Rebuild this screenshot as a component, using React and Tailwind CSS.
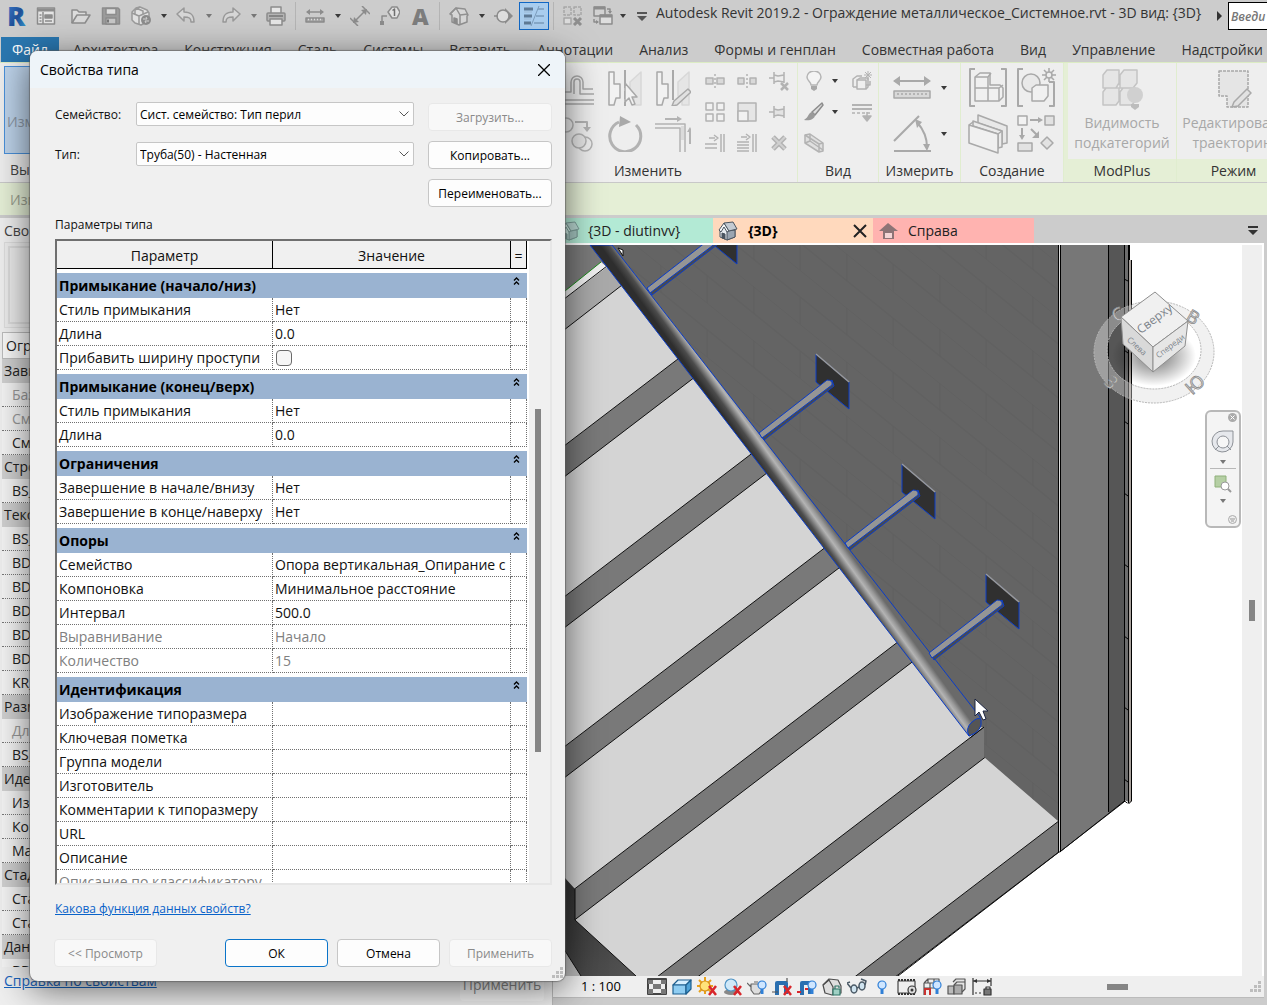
import clsx from 'clsx';

const MENU = [
  'Архитектура', 'Конструкция', 'Сталь', 'Системы', 'Вставить', 'Аннотации', 'Анализ',
  'Формы и генплан', 'Совместная работа', 'Вид', 'Управление', 'Надстройки',
];

const PROPERTIES = [
  { head: 'Завис.' },
  { name: 'База', off: true },
  { name: 'Смещ.', off: true },
  { name: 'Смещ.' },
  { head: 'Строит.' },
  { name: 'BS_' },
  { head: 'Текст' },
  { name: 'BS_' },
  { name: 'BD_' },
  { name: 'BD_' },
  { name: 'BD_' },
  { name: 'BD_' },
  { name: 'BD_' },
  { name: 'KR_' },
  { head: 'Разм.' },
  { name: 'Дл.', off: true },
  { name: 'BS_' },
  { head: 'Идент.' },
  { name: 'Изоб.' },
  { name: 'Ком.' },
  { name: 'Мар.' },
  { head: 'Стадии' },
  { name: 'Стад.' },
  { name: 'Стад.' },
  { head: 'Данные' },
  { name: 'BD_' },
];

const TYPE_GROUPS = [
  {
    title: 'Примыкание (начало/низ)',
    rows: [
      { name: 'Стиль примыкания', value: 'Нет' },
      { name: 'Длина', value: '0.0' },
      { name: 'Прибавить ширину проступи', check: true },
    ],
  },
  {
    title: 'Примыкание (конец/верх)',
    rows: [
      { name: 'Стиль примыкания', value: 'Нет' },
      { name: 'Длина', value: '0.0' },
    ],
  },
  {
    title: 'Ограничения',
    rows: [
      { name: 'Завершение в начале/внизу', value: 'Нет' },
      { name: 'Завершение в конце/наверху', value: 'Нет' },
    ],
  },
  {
    title: 'Опоры',
    rows: [
      { name: 'Семейство', value: 'Опора вертикальная_Опирание с' },
      { name: 'Компоновка', value: 'Минимальное расстояние' },
      { name: 'Интервал', value: '500.0' },
      { name: 'Выравнивание', value: 'Начало', off: true },
      { name: 'Количество', value: '15', off: true },
    ],
  },
  {
    title: 'Идентификация',
    rows: [
      { name: 'Изображение типоразмера' },
      { name: 'Ключевая пометка' },
      { name: 'Группа модели' },
      { name: 'Изготовитель' },
      { name: 'Комментарии к типоразмеру' },
      { name: 'URL' },
      { name: 'Описание' },
      { name: 'Описание по классификатору', off: true },
    ],
  },
];

/* ---------- icons ---------- */

function Svg({ size = 20, children, className }) {
  return (
    <svg
      width={size}
      height={size}
      viewBox={`0 0 ${size} ${size}`}
      fill="none"
      stroke="#8c8c8c"
      strokeWidth="1.5"
      strokeLinejoin="round"
      aria-hidden="true"
      className={clsx('shrink-0', className)}
    >
      {children}
    </svg>
  );
}

function Caret({ dark = true }) {
  return (
    <svg width="6" height="4" viewBox="0 0 6 4" aria-hidden="true" className="shrink-0">
      <path d="M0 0h6L3 4z" fill={dark ? '#3a3a3a' : '#777'} />
    </svg>
  );
}

function RevitLogo() {
  return (
    <svg width="22" height="28" viewBox="0 0 22 28" aria-hidden="true" className="overflow-visible">
      <defs>
        <linearGradient id="logo" x1="0" y1="0" x2="1" y2="1">
          <stop offset="0" stopColor="#3f7fd0" />
          <stop offset="0.55" stopColor="#1f4f96" />
          <stop offset="1" stopColor="#38a3d8" />
        </linearGradient>
      </defs>
      <text x="2" y="24" fontSize="27" fontWeight="800" fontFamily="Open Sans, sans-serif" fill="url(#logo)">R</text>
    </svg>
  );
}

const qat = {
  window: (
    <Svg>
      <rect x="1.5" y="2" width="17" height="16" fill="#e4e4e4" />
      <path d="M2 4h16" stroke="#8c8c8c" strokeWidth="3" />
      <path d="M7 6v12" />
      <path d="M3.500 9h2M3.500 12h2M3.500 15h2M9 15h7" />
      <path d="M9 9h7v3H9z" fill="#8c8c8c" />
    </Svg>
  ),
  folder: (
    <Svg>
      <path d="M1 17V4h5l2 2h7v3" fill="#dcdcdc" />
      <path d="M1 17l5-8h13l-5 8z" fill="#d8d8d8" />
    </Svg>
  ),
  save: (
    <Svg>
      <path d="M1.500 2h15.500l1.500 1.500V18H1.500z" fill="#9c9c9c" />
      <path d="M5 2.500h10v6H5z" fill="#dedede" />
      <path d="M5 12h10v6H5z" fill="#c6c6c6" />
      <path d="M7 13.500v3" stroke="#777" strokeWidth="2" />
    </Svg>
  ),
  cube: (
    <Svg>
      <path d="M1 6l4-4 4-1 7 3 2 3v8l-8 4-6-2-3-3z" fill="#e2e2e2" stroke="#9a9a9a" />
      <path d="M1 7l7 3 9-4M8 10v8M5 2l7 3v4M9 1L4 4v4" stroke="#9a9a9a" />
      <circle cx="15" cy="14" r="5" fill="#8c8c8c" stroke="none" />
      <path d="M12 13h4l-1-2M18 15h-4l1 2" stroke="#d4d4d4" strokeWidth="1" />
    </Svg>
  ),
  undo: (
    <Svg>
      <path d="M1 8l7-6v4c6 0 10 2 10 10h-3c0-4-2-5-7-5v4z" fill="#d6d6d6" stroke="#999" />
    </Svg>
  ),
  redo: (
    <Svg>
      <path d="M19 8l-7-6v4C6 6 2 8 2 16h3c0-4 2-5 7-5v4z" fill="#d6d6d6" stroke="#999" />
    </Svg>
  ),
  print: (
    <Svg>
      <path d="M5 7V1h10v6" fill="#e6e6e6" />
      <rect x="1" y="7" width="18" height="8" rx="1" fill="#b4b4b4" />
      <path d="M4 13h12v6H4z" fill="#e6e6e6" />
      <path d="M3 10h14" stroke="#777" />
    </Svg>
  ),
  ruler: (
    <Svg>
      <path d="M2 6h16" />
      <path d="M1 6l4-3v6zM19 6l-4-3v6z" fill="#8c8c8c" stroke="none" />
      <rect x="1" y="12" width="18" height="4" fill="#a4a4a4" />
      <path d="M3 13.500h14" stroke="#ddd" strokeDasharray="1 2" />
    </Svg>
  ),
  dim: (
    <Svg>
      <path d="M4 16L16 4M0 12l8 8M12 0l8 8" />
      <path d="M3 17l1-6 5 5zM17 3l-1 6-5-5z" fill="#8c8c8c" stroke="none" />
    </Svg>
  ),
  tag: (
    <Svg>
      <path d="M2 18V10h5" />
      <rect x="0" y="15" width="4" height="4" fill="#8c8c8c" stroke="none" />
      <path d="M12 1h5l3 5-3 6h-5L8 6z" fill="#e2e2e2" />
      <path d="M12.500 4.500L14.500 3v7" stroke="#6f6f6f" />
    </Svg>
  ),
  text: (
    <svg width="20" height="28" viewBox="0 0 20 28" aria-hidden="true" className="overflow-visible">
      <text x="2" y="23" fontSize="23" fontWeight="800" fontFamily="Open Sans, sans-serif" fill="#7d7d7d">A</text>
    </svg>
  ),
  house: (
    <Svg>
      <path d="M1 8l6-6 9 1 3 6-1 1v6l-8 3-7-3V9z" fill="#d6d6d6" stroke="#909090" />
      <path d="M1 8l6-6 4 7v9M11 9l8-1" stroke="#909090" />
      <path d="M5 17v-5l3 1v5" fill="#8c8c8c" />
    </Svg>
  ),
  section: (
    <Svg>
      <path d="M11 2l8 8-8 8z" fill="#8c8c8c" stroke="none" />
      <circle cx="9" cy="10" r="6" fill="#dedede" />
      <path d="M0 10h4" />
    </Svg>
  ),
  thin: (
    <Svg size={22}>
      <path d="M1 4h9M1 11h8M1 18h7" stroke="#5f7a95" strokeWidth="3" />
      <path d="M1 7h8M1 14h7" stroke="#9db8d2" strokeWidth="1" />
      <path d="M16 1L8 21" stroke="#7b9cbc" strokeWidth="1" />
      <path d="M15 4h6M13 11h8M11 18h10" stroke="#7b9cbc" strokeWidth="1.500" />
    </Svg>
  ),
  hidden: (
    <Svg>
      <path d="M1 1h7v8H1zM11 1h7v8h-7z" stroke="#a6a6a6" strokeDasharray="3 1" />
      <path d="M1 12h7v6H1z" fill="#dcdcdc" stroke="#a6a6a6" />
      <path d="M11 12l7 7M18 12l-7 7" stroke="#8f8f8f" strokeWidth="3" />
    </Svg>
  ),
  switch: (
    <Svg>
      <path d="M1 1h11v9H1z" fill="#d2d2d2" />
      <path d="M1 2h11" stroke="#8c8c8c" strokeWidth="3" />
      <path d="M7 9h12v9H7z" fill="#dedede" />
      <path d="M7 10h12" stroke="#8c8c8c" strokeWidth="3" />
      <path d="M14 3h3v4M1 13v3h4" />
      <path d="M15 5h4l-2 3zM3 14v4l3-2z" fill="#8c8c8c" stroke="none" />
    </Svg>
  ),
};

const big = {
  offset: (
    <Svg size={36} className="opacity-70">
      <path d="M0 22h12V12a6 6 0 0 1 12 0v7h10M0 30h35M0 34h35" />
      <path d="M15 24V12a3 3 0 0 1 6 0v12h14" />
    </Svg>
  ),
  mirrorPick: (
    <Svg size={36} className="opacity-70">
      <path d="M2 2h5v12h6v14H9l-2 7H2z" fill="#f4f4f4" />
      <path d="M34 2l-11 10v14l4 2v7h7z" stroke="#cfcfcf" fill="#e2e2e2" />
      <path d="M18 0v36" strokeWidth="2" strokeDasharray="18 3 8 3" />
      <path d="M18 13v19l4-4 3 7 3-1-3-7h5z" fill="#f4f4f4" />
    </Svg>
  ),
  mirrorDraw: (
    <Svg size={36} className="opacity-70">
      <path d="M2 2h5v12h6v14H9l-2 7H2z" fill="#f4f4f4" />
      <path d="M34 2l-11 10v14l4 2v7h7z" stroke="#cfcfcf" fill="#e2e2e2" />
      <path d="M18 0v30" strokeWidth="2" />
      <path d="M33 19l3 3-14 13-5 1 2-5z" fill="#dcdcdc" />
    </Svg>
  ),
  copy: (
    <Svg size={36} className="opacity-60">
      <circle cx="7" cy="9" r="7" />
      <path d="M16 6h12v8" strokeWidth="2" />
      <path d="M24 11h8l-4 5z" fill="#8c8c8c" stroke="none" />
      <circle cx="26" cy="28" r="7" />
      <circle cx="20" cy="25" r="7" fill="#e4e4e4" />
    </Svg>
  ),
  rotate: (
    <Svg size={36} className="opacity-70">
      <path d="M29 9a15.500 15.500 0 1 1-17-3" strokeWidth="3" stroke="#9a9a9a" />
      <path d="M13 0l11 6-12 5z" fill="#8c8c8c" stroke="none" />
    </Svg>
  ),
  trim: (
    <Svg size={36} className="opacity-60">
      <path d="M10 3h14" strokeWidth="2" />
      <path d="M22 0l5 3-5 3z" fill="#8c8c8c" stroke="none" />
      <path d="M0 8h30v28M0 12h25v24" />
      <path d="M26 10h3v14h-3z" fill="#cfcfcf" stroke="none" />
      <path d="M35 28V14" strokeWidth="2" />
      <path d="M32 16l3-5 3 5z" fill="#8c8c8c" stroke="none" />
    </Svg>
  ),
  measure: (
    <Svg size={38} className="opacity-70">
      <path d="M3 12h32" strokeWidth="2" />
      <path d="M0 12l7-5v10zM38 12l-7-5v10z" fill="#8c8c8c" stroke="none" />
      <rect x="1" y="22" width="36" height="7" fill="#cfcfcf" />
      <path d="M4 25h30" strokeDasharray="2 2" />
    </Svg>
  ),
  angle: (
    <Svg size={38} className="opacity-70">
      <path d="M1 36h37M1 26L26 1" strokeWidth="2" />
      <path d="M24 7c6 7 10 16 10 25" strokeWidth="2" />
      <path d="M22 4l7 3-5 6zM30 29h7l-3 7z" fill="#8c8c8c" stroke="none" />
    </Svg>
  ),
  group: (
    <Svg size={40} className="opacity-70">
      <path d="M7 1H2v37h5M33 1h5v37h-5" strokeWidth="2" />
      <path d="M7 9l5-4h10v12h10l3 3v9l-4 4H7z" fill="#f2f2f2" />
      <path d="M7 20h13v13M20 20V9H7M20 9l3-4M20 20h11v13M31 20l4-3" />
    </Svg>
  ),
  similar: (
    <Svg size={40} className="opacity-70">
      <path d="M7 1H2v37h5M33 14h5v24h-5" strokeWidth="2" />
      <circle cx="15" cy="15" r="9" fill="#e8e8e8" />
      <path d="M16 20l4-3h12v11l-4 5H16z" fill="#f2f2f2" />
      <path d="M33 0v14M26 7h14M28 2l10 10M38 2L28 12" />
      <circle cx="33" cy="7" r="3" fill="#eee" />
    </Svg>
  ),
  parts: (
    <Svg size={40} className="opacity-70">
      <path d="M10 1l29 11v17l-5 1V17L10 9z" fill="#e6e6e6" />
      <path d="M5 7l29 10v16l-4 1V20L5 12z" fill="#eaeaea" />
      <path d="M1 11l29 9v19L1 29z" fill="#f2f2f2" />
      <path d="M1 11l4-3M30 20l4-3" />
    </Svg>
  ),
  assembly: (
    <Svg size={40} className="opacity-70">
      <rect x="2" y="2" width="9" height="9" fill="#f4f4f4" />
      <rect x="29" y="2" width="9" height="9" fill="#ddd" />
      <rect x="2" y="29" width="14" height="8" fill="#ddd" />
      <path d="M31 23l6 6-6 6-6-6z" fill="#ddd" />
      <path d="M14 6h9M6 14v8M15 15l6 6" strokeWidth="2" />
      <path d="M22 3l5 3-5 3zM3 21h6l-3 5zM23 17v7h-7z" fill="#8c8c8c" stroke="none" />
    </Svg>
  ),
  modplus: (
    <Svg size={42} className="opacity-60">
      <g fill="#e0e0e0">
        <path d="M2 7l4-5h12v13l-3 5H2zM19 7l4-5h13v13l-4 5H19zM2 24l3-4h13v13l-3 4H2zM19 24l3-4h12v13l-3 4H19z" stroke="#a8a8a8" />
      </g>
      <circle cx="34" cy="27" r="8" fill="#bdbdbd" stroke="none" />
      <path d="M30 36h8v3l-4 3-4-3z" fill="#9c9c9c" stroke="none" />
    </Svg>
  ),
  path: (
    <Svg size={40} className="opacity-70">
      <path d="M5 2h29v36H13V27H5z" fill="#e2e2e2" strokeDasharray="3 1" />
      <path d="M33 20l4 4-13 13-6 1 2-5z" fill="#dedede" />
    </Svg>
  ),
};

const small = {
  splitEl: <Svg><path d="M1 7h7v6H1zM12 7h7v6h-7z" fill="#ccc" /><path d="M10 3v14" strokeDasharray="2 2" /></Svg>,
  splitGap: <Svg><path d="M1 7h6v6H1zM13 7h6v6h-6z" fill="#ccc" /><path d="M10 3v14" strokeDasharray="2 2" /></Svg>,
  unpin: (
    <Svg>
      <path d="M0 7h5M5 1v12M5 4l4 1 6-1v7l-6-1-4 1M15 1v11" />
      <path d="M12 12l7 7M19 12l-7 7" strokeWidth="2.500" />
    </Svg>
  ),
  array: <Svg><path d="M1 1h7v7H1zM12 1h7v7h-7zM1 12h7v7H1zM12 12h7v7h-7z" fill="#f4f4f4" /></Svg>,
  scale: <Svg><path d="M1 1h18v18H1z" fill="#e0e0e0" /><path d="M1 9h10v10H1z" fill="#f4f4f4" /></Svg>,
  pin: <Svg><path d="M0 10h5M5 4v12M5 7l4 1 6-1v7l-6-1-4 1M15 4v12" fill="#ddd" /></Svg>,
  trimOne: (
    <Svg>
      <path d="M16 1v18M19 1v18M0 11h12M0 15h12" />
      <path d="M4 5h6M9 2l4 3-4 3" />
    </Svg>
  ),
  trimMany: (
    <Svg>
      <path d="M16 1v18M19 1v18M0 9h12M0 12h12M0 15h12M0 18h12" />
      <path d="M4 4h6M9 1l4 3-4 3" />
    </Svg>
  ),
  remove: <Svg><path d="M4 4l12 12M16 4L4 16" strokeWidth="5" /><path d="M4 4l12 12M16 4L4 16" stroke="#bdbdbd" strokeWidth="2" /></Svg>,
  bulb: (
    <Svg>
      <path d="M7 14c0-3-4-4-4-8a7 6 0 0 1 14 0c0 4-4 5-4 8z" fill="#f4f4f4" stroke="#b5b5b5" />
      <path d="M7 15h6v3l-3 2-3-2z" fill="#a8a8a8" stroke="none" />
    </Svg>
  ),
  override: (
    <Svg>
      <path d="M1 16V8l4-3h5M1 16h4M14 14h4v-4" />
      <path d="M5 9h9v9H5z" fill="#f0f0f0" />
      <path d="M5 9l3-2h8v9l-2 2" />
      <path d="M16 0v9M12 4h8M13 1l6 6M19 1l-6 6" strokeWidth="1" />
    </Svg>
  ),
  brush: (
    <Svg>
      <path d="M18 1l1 2-8 10-3-3z" fill="#ddd" />
      <path d="M8 10l3 3c0 4-5 6-11 5 5-3 4-7 8-8z" fill="#9a9a9a" stroke="none" />
    </Svg>
  ),
  lines: (
    <Svg>
      <path d="M0 3h20M0 7h20" strokeWidth="2" />
      <path d="M0 11h20" strokeDasharray="3 2" />
      <path d="M15 10v6M11 14h8l-4 5z" fill="#8c8c8c" />
    </Svg>
  ),
  box: (
    <Svg>
      <path d="M1 2l5-1 13 9v8l-4 1L1 10z" fill="#d8d8d8" />
      <path d="M1 2l14 9v8M15 11l4-1M6 1v7l13 9M6 8l-5 2" />
    </Svg>
  ),
};

/* ---------- top bars ---------- */

function QuickButton({ label, children, active }) {
  return (
    <button
      type="button"
      aria-label={label}
      className={clsx(
        'flex h-7 w-[30px] shrink-0 items-center justify-center',
        active && 'border border-[#1167c4] bg-[#a9cdee]'
      )}
    >
      {children}
    </button>
  );
}

function Drop({ dark = true }) {
  return (
    <button type="button" aria-label="Ещё" className="flex h-7 w-[15px] shrink-0 items-center justify-center">
      <Caret dark={dark} />
    </button>
  );
}

function Divider() {
  return (
    <span className="flex w-[9px] shrink-0 justify-center">
      <span className="h-7 w-px bg-[#b4b4b4]" />
    </span>
  );
}

function TitleBar() {
  return (
    <div className="flex h-[37px] items-start overflow-hidden pt-0.5 pl-px">
      <QuickButton label="Revit"><RevitLogo /></QuickButton>
      <QuickButton label="Главная">{qat.window}</QuickButton>
      <span className="w-[5px] shrink-0" />
      <QuickButton label="Открыть">{qat.folder}</QuickButton>
      <QuickButton label="Сохранить">{qat.save}</QuickButton>
      <QuickButton label="Синхронизировать">{qat.cube}</QuickButton>
      <Drop />
      <QuickButton label="Отменить">{qat.undo}</QuickButton>
      <Drop dark={false} />
      <QuickButton label="Повторить">{qat.redo}</QuickButton>
      <Drop dark={false} />
      <QuickButton label="Печать">{qat.print}</QuickButton>
      <Divider />
      <QuickButton label="Измерить">{qat.ruler}</QuickButton>
      <Drop />
      <QuickButton label="Размер">{qat.dim}</QuickButton>
      <QuickButton label="Марка">{qat.tag}</QuickButton>
      <QuickButton label="Текст">{qat.text}</QuickButton>
      <Divider />
      <QuickButton label="3D вид">{qat.house}</QuickButton>
      <Drop />
      <QuickButton label="Разрез">{qat.section}</QuickButton>
      <QuickButton label="Тонкие линии" active>{qat.thin}</QuickButton>
      <Divider />
      <QuickButton label="Закрыть скрытые">{qat.hidden}</QuickButton>
      <QuickButton label="Переключить окна">{qat.switch}</QuickButton>
      <button type="button" aria-label="Ещё" className="flex h-7 w-2.5 shrink-0 items-center justify-center"><Caret /></button>
      <span className="flex h-7 w-7 shrink-0 items-center justify-center">
        <svg width="10" height="9" viewBox="0 0 10 9" aria-hidden="true">
          <path d="M0 0h10v2H0zM0 4h10L5 9z" fill="#555" />
        </svg>
      </span>
      <h1 className="shrink-0 text-sm leading-[22px] text-[#333]">
        Autodesk Revit 2019.2 - Ограждение металлическое_Системное.rvt - 3D вид: {'{3D}'}
      </h1>
      <span className="flex h-7 flex-1 items-center justify-end pr-1.5">
        <svg width="5" height="10" viewBox="0 0 5 10" aria-hidden="true"><path d="M0 0l5 5-5 5z" fill="#333" /></svg>
      </span>
      <input
        type="text"
        aria-label="Поиск"
        placeholder="Введи"
        className="h-7 w-[39px] shrink-0 border border-r-0 border-black bg-white pl-0.5 text-xs font-semibold italic placeholder:text-[#777]"
      />
    </div>
  );
}

function MenuTabs() {
  return (
    <nav className="flex h-[25px] items-stretch overflow-hidden pl-px text-sm whitespace-nowrap text-[#333]">
      <button type="button" className="w-[58px] shrink-0 bg-[#2a77b0] text-white">Файл</button>
      <div className="flex min-w-0 flex-1 items-center justify-between pr-1 pl-[14px]">
        {MENU.map((m) => (
          <button type="button" key={m}>{m}</button>
        ))}
      </div>
    </nav>
  );
}

function Panel({ title, className, green, children }) {
  return (
    <section className={clsx('flex shrink-0 flex-col overflow-hidden border-r border-[#e0edcf] bg-[#eee]', className)}>
      <div className="flex flex-1 pt-0.5">{children}</div>
      <h2 className={clsx('h-[23px] text-center text-sm leading-6 font-normal text-[#333]', green && 'bg-[#e5efd6]')}>
        {title}
      </h2>
    </section>
  );
}

function Cell({ className, children }) {
  return (
    <button type="button" aria-label="Команда" className={clsx('flex items-center justify-center', className)}>
      {children}
    </button>
  );
}

function Ribbon() {
  return (
    <div className="flex h-[121px] shrink-0 overflow-hidden border-y border-t-[#dcecc4] border-b-[#c8c8c8] bg-[#eee]">
      <section className="flex min-w-0 flex-1 flex-col items-start pl-1">
        <button type="button" className="mt-[3px] h-[90px] w-16 border border-[#4a90d9] bg-[#bdd3ea] pt-6 pl-0.5 text-left text-sm text-[#8b97a5]">
          Изм.
        </button>
        <h2 className="flex-1 pt-1 pl-1.5 text-sm leading-6 font-normal text-[#444]">Выбор</h2>
      </section>
      <Panel title="Изменить" className="w-[299px]">
        <div className="flex flex-1 justify-end gap-0.5 pr-0.5">
          <div className="grid auto-rows-[46px] grid-cols-[48px_48px_48px]">
            {['offset', 'mirrorPick', 'mirrorDraw', 'copy', 'rotate', 'trim'].map((k) => (
              <Cell key={k}>{big[k]}</Cell>
            ))}
          </div>
          <div className="grid auto-rows-[31px] grid-cols-[32px_32px_32px]">
            {['splitEl', 'splitGap', 'unpin', 'array', 'scale', 'pin', 'trimOne', 'trimMany', 'remove'].map((k) => (
              <Cell key={k} className="opacity-60">{small[k]}</Cell>
            ))}
          </div>
        </div>
      </Panel>
      <Panel title="Вид" className="w-[81px]">
        <div className="grid auto-rows-[31px] grid-cols-[40px_36px] pl-1.5">
          <Cell className="justify-start gap-2">{small.bulb}<Caret /></Cell>
          <Cell className="opacity-60">{small.override}</Cell>
          <Cell className="justify-start gap-2">{small.brush}<Caret /></Cell>
          <Cell className="opacity-60">{small.lines}</Cell>
          <Cell className="justify-start opacity-60">{small.box}</Cell>
        </div>
      </Panel>
      <Panel title="Измерить" className="w-[82px]">
        <div className="grid auto-rows-[46px] pl-3.5">
          <Cell className="gap-2.5">{big.measure}<Caret /></Cell>
          <Cell className="gap-2.5">{big.angle}<Caret /></Cell>
        </div>
      </Panel>
      <Panel title="Создание" className="w-[103px]">
        <div className="grid flex-1 auto-rows-[46px] grid-cols-[48px_48px] justify-center">
          {['group', 'similar', 'parts', 'assembly'].map((k) => (
            <Cell key={k}>{big[k]}</Cell>
          ))}
        </div>
      </Panel>
      <span className="w-1 shrink-0 bg-[#e5efd6]" />
      <Panel title="ModPlus" className="w-[109px]" green>
        <button type="button" className="flex flex-1 flex-col items-center text-sm text-[#a8a8a8]">
          <span className="flex h-12 shrink-0 items-center">{big.modplus}</span>
          Видимость<br />подкатегорий
        </button>
      </Panel>
      <Panel title="Режим" className="-mr-6 w-[114px]" green>
        <button type="button" className="flex flex-1 flex-col items-center text-sm whitespace-nowrap text-[#a8a8a8]">
          <span className="flex h-12 shrink-0 items-center">{big.path}</span>
          Редактировать<br />траекторию
        </button>
      </Panel>
    </div>
  );
}

/* ---------- properties palette ---------- */

function PropertiesPalette() {
  return (
    <aside className="flex w-[553px] shrink-0 flex-col overflow-hidden border-r border-[#bbb] bg-[#efefef] pl-0.5 text-sm text-[#222]">
      <h2 className="h-6 shrink-0 pl-0.5 leading-[25px] font-normal text-[#444]">Свой.</h2>
      <div className="mx-0.5 mb-1 h-[86px] shrink-0 border border-[#ddd] bg-[#ececec] p-[3px]">
        <div className="h-full border-2 border-[#dcdcdc]" />
      </div>
      <select aria-label="Тип элемента" className="h-[27px] shrink-0 appearance-none border border-[#bbb] bg-[#f8f8f8] pl-[3px]">
        <option>Огр.</option>
      </select>
      <div className="min-h-0 flex-1 overflow-hidden bg-[#f4f4f4]">
        {PROPERTIES.map((p, i) =>
          p.head ? (
            <h3 key={i} className="h-6 bg-[#d0d0d0] pl-0.5 leading-6 font-normal">{p.head}</h3>
          ) : (
            <div key={i} className={clsx('h-6 border-b border-dotted border-[#777] pl-2.5 leading-6', p.off && 'text-[#999]')}>
              {p.name}
            </div>
          )
        )}
      </div>
      <div className="flex h-[38px] shrink-0 items-start justify-between pt-0.5 pr-2">
        <a href="#help" className="pl-0.5 leading-6 text-[#1763bd] underline">Справка по свойствам</a>
        <button type="button" disabled className="w-[84px] rounded bg-[#f6f6f6] py-1 leading-6 text-[#888]">Применить</button>
      </div>
    </aside>
  );
}

/* ---------- 3D view ---------- */

function HouseIcon({ muted }) {
  return (
    <Svg className={clsx(muted && 'opacity-50')}>
      <g stroke="#4a5560" strokeWidth="1">
        <path d="M2 9v7l7 3 8-3v-7l-7-6z" fill="#e9edf1" />
        <path d="M9 10v9l8-3V9z" fill="#9aa5b1" />
        <path d="M1 9l5-7 5 8-2 1-3-5-3 5z" fill="#f4f6f8" />
        <path d="M6 2l9-1 4 7-8 2z" fill="#c3cad2" />
        <path d="M4 17v-5l3 1v5z" fill="#4a5560" />
      </g>
    </Svg>
  );
}

function ViewTabs() {
  return (
    <div className="flex h-[25px] shrink-0 items-stretch bg-[#ccc] text-sm text-[#222]">
      <button type="button" className="flex w-40 items-center gap-2 bg-[#b3ead5] pl-[7px]">
        <HouseIcon muted />{'{3D - diutinvv}'}
      </button>
      <div className="flex w-40 items-center bg-[#ffd9bd] pr-1.5 pl-[5px]">
        <button type="button" className="flex flex-1 items-center gap-2.5 font-bold text-black">
          <HouseIcon />{'{3D}'}
        </button>
        <button type="button" aria-label="Закрыть">
          <svg width="14" height="14" viewBox="0 0 14 14" stroke="#222" strokeWidth="2" aria-hidden="true">
            <path d="M1 1l12 12M13 1L1 13" />
          </svg>
        </button>
      </div>
      <button type="button" className="flex w-[161px] items-center gap-2.5 bg-[#ffb3b0] pl-[5px]">
        <Svg>
          <path d="M10 2l10 8h-4v8H5v-8H1z" fill="#8d7476" stroke="none" />
          <path d="M7 12h7v5H7z" fill="#f3d5d5" stroke="none" />
        </Svg>
        Справа
      </button>
      <span className="flex flex-1 items-center justify-end pr-1.5">
        <svg width="10" height="9" viewBox="0 0 10 9" aria-hidden="true"><path d="M0 0h10v2H0zM0 4h10L5 9z" fill="#333" /></svg>
      </span>
    </div>
  );
}

// y of every riser's upper edge on the x = 780 line
const RISERS = [281, 432, 582, 732, 883, 1034];
const SLOPE = 0.764;
const yAt = (base, x) => base + (780 - x) * SLOPE;

function Riser({ base }) {
  return (
    <g>
      <path
        d={`M555 ${yAt(base, 555)}L1060 ${yAt(base, 1060)}V${yAt(base + 31, 1060)}L555 ${yAt(base + 31, 555)}z`}
        fill="#797979"
      />
      <path
        d={`M555 ${yAt(base, 555)}L1060 ${yAt(base, 1060)}M555 ${yAt(base + 31, 555)}L1060 ${yAt(base + 31, 1060)}`}
        stroke="#111"
      />
    </g>
  );
}

function Bracket({ dx, dy }) {
  return (
    <g transform={`translate(${dx} ${dy})`} stroke="#0a3cc8">
      <path d="M816 354l33 28v27l-33-27z" fill="#303030" />
      <path d="M816 354l33 28" stroke="#9a9a9a" strokeWidth="1.500" />
      <path d="M764 440l70-54-2-6-71 54z" fill="#4a4a4a" />
      <path d="M759 433l68-53q6 0 5 5l-70 53z" fill="#959595" />
    </g>
  );
}

function Scene() {
  return (
    <svg viewBox="555 245 687 731" preserveAspectRatio="xMinYMin slice" fill="none" className="block h-full w-full" role="img" aria-label="Лестница с настенным поручнем">
      <defs>
        <pattern id="bricks" width="93" height="54" patternUnits="userSpaceOnUse" patternTransform="skewY(39)">
          <path d="M0 0h93M0 27h93M10 0v27M56 27v27" stroke="#5e5e5e" strokeWidth="0.800" />
        </pattern>
        <linearGradient id="pipe" gradientUnits="userSpaceOnUse" x1="748" y1="450" x2="766" y2="437">
          <stop offset="0" stopColor="#2e2e2e" />
          <stop offset="0.3" stopColor="#4c4c4c" />
          <stop offset="0.65" stopColor="#b4b4b4" />
          <stop offset="0.8" stopColor="#999" />
          <stop offset="1" stopColor="#6a6a6a" />
        </linearGradient>
        <linearGradient id="stringer" x1="0" y1="0" x2="1" y2="1">
          <stop offset="0" stopColor="#2c2c2c" />
          <stop offset="1" stopColor="#555" />
        </linearGradient>
      </defs>

      <path d="M555 245H1060V852L898 976H555z" fill="#d4d4d4" />
      {RISERS.map((b) => <Riser key={b} base={b} />)}

      {/* upper landing */}
      <path d="M555 245h80v30L555 337z" fill="#a9a9a9" />
      <path d="M555 337l80-62" stroke="#111" />
      <path d="M555 299V245h35l16 20z" fill="#7b7b7b" />
      <path d="M555 299l46-37 6 5-52 39z" fill="#f0f0f0" />
      <path d="M555 299l46-37" stroke="#1c8a1c" />
      <path d="M555 306l52-40" stroke="#111" />

      {/* stringer and what lies left of it */}
      <path d="M555 867l20 22v31l61 56h-81z" fill="url(#stringer)" />
      <path d="M575 889v31l61 56" stroke="#111" />
      <path d="M555 935l26 41h-26z" fill="#b9b9b9" />
      <path d="M555 935l26 41" stroke="#111" />

      {/* wall */}
      <path d="M600 245H1058V821L984 757V727L970 728z" fill="#646464" />
      <path d="M600 245H1058V821L984 757V727L970 728z" fill="url(#bricks)" />
      <path d="M970 738l14-11" stroke="#111" />
      <path d="M618 248l5 8v-6z" fill="#fff" stroke="#111" />

      {/* right hand columns */}
      <path d="M1061 245h48v568l-48 38z" fill="#777" />
      <path d="M1109 245h15v557l-15 11z" fill="#565656" />
      <path d="M1124 245h5v557l-5-2z" fill="#6d6d6d" />
      <path d="M1129 260h3v541l-3 2z" fill="#a8a19c" />
      <path d="M1059.500 245v607" stroke="#ddd" strokeWidth="2" />
      <path d="M1058.500 245v607h2V245M1108.500 245v567M1124.500 245v557M1128.500 245v558M1131.500 260v541l-3 3-4-3L1061 851" stroke="#000" />
      <path d="M1129 245v15" stroke="#000" strokeWidth="2" />
      <path d="M1124 279l4 2M1124 350l4 3M1124 421l4 3M1124 493l4 3M1124 564l4 3M1124 636l4 3M1124 707l4 3M1124 779l4 3" stroke="#000" />
      <path d="M1059 853L898 976h344V804h-113l-5-2-63 50z" fill="#fff" />
      <path d="M1059 852L898 976M1061 851l63-49" stroke="#111" />

      {/* handrail */}
      <path d="M612 245L980 717q3 14-11 19L590 245z" fill="url(#pipe)" stroke="#0a3cc8" />
      <path d="M969 736q-4-8 3-14t9-2q2 11-12 16z" fill="#555" stroke="#0a3cc8" />
      <Bracket dx={-112} dy={-145} />
      <Bracket dx={0} dy={0} />
      <Bracket dx={86} dy={110} />
      <Bracket dx={170} dy={220} />

      <path d="M975 699v17l4-4 4 8 3-1-3-8h5z" fill="#fff" stroke="#1b2440" />
    </svg>
  );
}

function ViewCube() {
  return (
    <svg width="130" height="116" viewBox="1090 290 130 116" aria-hidden="true" fontFamily="Open Sans, sans-serif" className="absolute top-[45px] right-[22px]">
      <defs>
        <radialGradient id="cubeShade">
          <stop offset="0.3" stopColor="#000" stopOpacity="0.4" />
          <stop offset="1" stopColor="#000" stopOpacity="0" />
        </radialGradient>
      </defs>
      <path
        fillRule="evenodd"
        d="M1094 352a60 51 0 1 0 120 0a60 51 0 1 0-120 0zM1107 350a47 39 0 1 0 94 0a47 39 0 1 0-94 0z"
        fill="#dcdcdc"
        fillOpacity="0.4"
        stroke="#b5b5b5"
        strokeDasharray="2 1"
      />
      <ellipse cx="1154" cy="356" rx="42" ry="30" fill="url(#cubeShade)" />
      <g fill="#ddd" stroke="#8a8a8a" strokeWidth="0.800" fontSize="18">
        <text x="1112" y="321" transform="rotate(-30 1118 314)">С</text>
        <text x="1187" y="323" transform="rotate(30 1192 317)">В</text>
        <text x="1186" y="391" transform="rotate(-42 1195 385)">Ю</text>
        <text x="1106" y="388" transform="rotate(40 1111 382)">З</text>
      </g>
      <g stroke="#8e8e8e">
        <path d="M1155 292l33 29-35 26-32-30z" fill="#f0f0f0" />
        <path d="M1121 317l32 30v25l-30-28z" fill="#d9d9d9" />
        <path d="M1188 321l-35 26v25l32-26z" fill="#e6e6e6" />
      </g>
      <g fill="#7c838a" textAnchor="middle">
        <text x="1154" y="323" fontSize="12" transform="rotate(-37 1154 318)">Сверху</text>
        <text x="1137" y="349" fontSize="8" transform="rotate(42 1137 346)">Слева</text>
        <text x="1170" y="349" fontSize="8" transform="rotate(-37 1170 346)">Спереди</text>
      </g>
    </svg>
  );
}

function NavBar() {
  return (
    <div className="absolute top-[165px] right-px flex h-[118px] w-9 flex-col items-center rounded-md border-2 border-[#b8b8b8] bg-[#f4f4f4]">
      <button type="button" aria-label="Закрыть панель" className="self-end pr-0.5">
        <svg width="9" height="9" viewBox="0 0 9 9" className="mt-px"><circle cx="4.500" cy="4.500" r="4.500" fill="#aaa" /><path d="M2.500 2.500l4 4M6.500 2.500l-4 4" stroke="#fff" /></svg>
      </button>
      <button type="button" aria-label="Штурвал" className="mt-2">
        <svg width="24" height="24" viewBox="0 0 24 24" fill="#e6e8ec" stroke="#8d9197">
          <path d="M12 1h10v11a10.500 10.500 0 1 1-10-11z" />
          <circle cx="12" cy="12" r="6" fill="#f6f6f6" />
          <path d="M4 20l4-4M16 16l4 4" />
        </svg>
      </button>
      <span className="mt-1.5"><Caret dark={false} /></span>
      <span className="mt-1 h-px w-[26px] bg-[#b8b8b8]" />
      <button type="button" aria-label="Зум" className="mt-1.5">
        <svg width="18" height="18" viewBox="0 0 18 18" fill="none">
          <path d="M1 1h11v11H1z" fill="#b5cfa4" stroke="#8fb07b" />
          <circle cx="11" cy="11" r="4" fill="#fff" stroke="#999" />
          <path d="M14 14l3 3" stroke="#999" strokeWidth="2" />
        </svg>
      </button>
      <span className="mt-1.5"><Caret dark={false} /></span>
      <button type="button" aria-label="Настройка" className="mt-auto self-end pr-0.5 pb-0.5">
        <svg width="9" height="9" viewBox="0 0 9 9"><circle cx="4.500" cy="4.500" r="4" fill="#eee" stroke="#aaa" /><path d="M2 4h5M3 6h3" stroke="#999" /></svg>
      </button>
    </div>
  );
}

const redX = <path d="M12 9l7 9M19 9l-7 9" stroke="#d8262b" strokeWidth="2.500" />;
const blueBulb = (
  <g>
    <circle cx="15" cy="8" r="4" fill="#cfe6ff" stroke="#2f7fd6" />
    <path d="M15 12v5" stroke="#2f7fd6" strokeWidth="3" />
  </g>
);

const VIEW_CONTROLS = [
  ['Уровень детализации', <g><path d="M1 2h18v15H1z" fill="#eee" stroke="#444" strokeWidth="2" /><path d="M1 3h5v4H1zM14 3h5v4h-5zM6 7h8v5H6zM1 12h5v5H1zM14 12h5v5h-5z" fill="#777" stroke="none" /></g>],
  ['Визуальный стиль', <g stroke="#1d5f8f"><path d="M1 8l5-5h13l-5 5z" fill="#d6efff" /><path d="M1 8h13v9H1z" fill="#8fcdf2" /><path d="M14 8l5-5v9l-5 5z" fill="#4fa3d8" /></g>],
  ['Солнце', <g><path d="M8 0v17M0 9h16M2 3l12 12M14 3L2 15" stroke="#e8a21c" strokeWidth="2" /><circle cx="8" cy="9" r="5" fill="#ffe27a" stroke="#d8901a" />{redX}</g>],
  ['Тени', <g><ellipse cx="9" cy="15" rx="7" ry="3" fill="#888" stroke="none" /><circle cx="9" cy="8" r="6" fill="#cfe8f8" stroke="#4f93c4" />{redX}</g>],
  ['Визуализация', <g><path d="M4 7h10l1 6-3 4H7l-3-4zM4 10L0 6M7 5h4" fill="#ddd" stroke="#666" />{blueBulb}</g>],
  ['Обрезать вид', <g><path d="M5 18V6h9v11" stroke="#2a6fb0" strokeWidth="4" /><path d="M0 15h6M15 1v4" stroke="#555" />{redX}</g>],
  ['Область подрезки', <g><path d="M5 18V6h8v11" stroke="#2a6fb0" strokeWidth="4" /><path d="M0 15h4M8 12h3" stroke="#d8262b" strokeWidth="2" />{blueBulb}</g>],
  ['Заблокировать вид', <g stroke="#4d4d4d"><path d="M1 8l6-6 9 1 3 6v7l-9 2-7-2z" fill="#dedede" /><path d="M1 8l6-5 4 7v8" /><path d="M11 12h7v6h-7z" fill="#9fd0c4" stroke="#2f7566" /><path d="M13 12V9h4v2" stroke="#2f7566" /></g>],
  ['Временно скрыть', <g stroke="#4b5a66" strokeWidth="1.500"><ellipse cx="7" cy="12" rx="3" ry="4" fill="#cfe3ef" /><ellipse cx="15" cy="9" rx="3" ry="4" fill="#cfe3ef" /><path d="M10 11l2-1M4 11L0 6l3-1M18 8l1-4-5-2" /></g>],
  ['Показать скрытые', <g><circle cx="10" cy="8" r="4" fill="#cfe6ff" stroke="#2f7fd6" /><path d="M10 12v5" stroke="#2f7fd6" strokeWidth="3" /></g>],
  ['Временный вид', <g><path d="M1 4h17v12H1z" fill="#eee" stroke="#444" /><path d="M1 3h17M1 17h17" stroke="#333" strokeWidth="2" strokeDasharray="2 1" /><circle cx="15" cy="13" r="4" fill="#ddd" stroke="#333" /><circle cx="15" cy="13" r="1.500" fill="#333" stroke="none" /></g>],
  ['Аналитическая модель', <g><path d="M2 6l4-4h11v9M2 6h11M2 6v12M8 6v12M2 11h11M6 2v4M12 2v9" stroke="#555" /><path d="M3 11v7M8 11v7M3 12h6" stroke="#c8322f" strokeWidth="2" />{blueBulb}</g>],
  ['Смещение', <g stroke="#555"><path d="M6 5l3-3h9v10l-3 3" fill="#e4e4e4" /><path d="M1 9h6v8H1z" fill="#bbb" /><path d="M7 8h8v9H7z" fill="#aaa" /><path d="M7 8l3-3h8" /></g>],
  ['Зависимости', <g stroke="#333"><path d="M1 1v17M19 1v8M1 4h18" /><path d="M1 4l4-2v4zM19 4l-4-2v4z" fill="#333" stroke="none" /><path d="M3 16h8" strokeDasharray="2 2" /><path d="M12 12h7v6h-7z" fill="#777" /><path d="M14 12v-2h4v2" /></g>],
];

function ViewControlBar() {
  return (
    <div className="flex h-[21px] shrink-0 items-center overflow-hidden bg-[#efefef] pr-[3px] pl-7 text-[13px] text-black">
      <span className="w-[66px]">1 : 100</span>
      {VIEW_CONTROLS.map(([label, icon]) => (
        <button type="button" key={label} aria-label={label} className="flex w-[25px] shrink-0 items-center">
          <Svg><g strokeWidth="1.200">{icon}</g></Svg>
        </button>
      ))}
      <span className="flex flex-1 items-center justify-end pr-[121px]">
        <span className="h-1.5 w-[21px] bg-[#858585]" />
      </span>
      <Grip />
    </div>
  );
}

function Grip() {
  return (
    <svg width="12" height="12" viewBox="0 0 12 12" aria-hidden="true" className="shrink-0">
      <path d="M9 0h3v3H9zM5 4h3v3H5zM9 4h3v3H9zM1 8h3v3H1zM5 8h3v3H5zM9 8h3v3H9z" fill="#bdbdbd" />
    </svg>
  );
}

function ModelView() {
  return (
    <main className="flex min-w-0 flex-1 flex-col pr-[3px]">
      <ViewTabs />
      <div className="flex min-h-0 flex-1 border-t-2 border-r-2 border-white bg-[#efefef]">
        <div className="relative min-w-0 flex-1 overflow-hidden border-l-2 border-white bg-white">
          <Scene />
          <ViewCube />
          <NavBar />
        </div>
        <div className="flex w-5 flex-col items-center pt-[355px]">
          <span className="h-[21px] w-1.5 bg-[#858585]" />
        </div>
      </div>
      <ViewControlBar />
      <div className="h-2 shrink-0 border-t border-[#bbb] bg-[#ccc]" />
    </main>
  );
}

/* ---------- type properties dialog ---------- */

function DialogButton({ children, className, primary, ...rest }) {
  return (
    <button
      type="button"
      className={clsx(
        'h-7 rounded border bg-[#fdfdfd] pt-px text-xs text-black disabled:border-[#e8e8e8] disabled:bg-[#f8f8f8] disabled:text-[#8a8a8a]',
        primary ? 'border-[#0a74c9]' : 'border-[#c6c6c6]',
        className
      )}
      {...rest}
    >
      {children}
    </button>
  );
}

function Combo({ id, label, value }) {
  return (
    <>
      <label htmlFor={id} className="w-[81px] shrink-0 pt-px">{label}</label>
      <div className="relative mr-[14px] min-w-0 flex-1">
        <select id={id} className="block h-6 w-full appearance-none rounded-xs border border-[#c6c6c6] bg-[#fdfdfd] pt-px pl-[3px] text-black">
          <option>{value}</option>
        </select>
        <svg width="10" height="6" viewBox="0 0 10 6" fill="none" stroke="#555" aria-hidden="true" className="pointer-events-none absolute top-[9px] right-[5px]">
          <path d="M0.500 0.500L5 5l4.500-4.500" />
        </svg>
      </div>
    </>
  );
}

function TypeTable() {
  return (
    <div className="flex h-[646px] overflow-hidden border-2 border-t-[#6f6f6f] border-r-[#e6e6e6] border-b-[#e6e6e6] border-l-[#6f6f6f]">
      <div className="min-w-0 flex-1 overflow-hidden border-r-2 border-white bg-white">
        <table className="w-full table-fixed border-separate border-spacing-0 text-sm text-[#111]">
          <colgroup>
            <col className="w-[216px]" />
            <col />
            <col className="w-4" />
          </colgroup>
          <thead>
            <tr className="h-7 bg-[#f0f0f0]">
              <th className="border-r border-b border-black p-0 pt-0.5 font-normal">Параметр</th>
              <th className="border-r border-b border-black p-0 pt-0.5 font-normal">Значение</th>
              <th className="border-r border-b border-black p-0 pt-0.5 font-normal">=</th>
            </tr>
          </thead>
          {TYPE_GROUPS.map((g) => (
            <tbody key={g.title}>
              <tr>
                <th colSpan={2} className="h-[29px] border-t-4 border-white bg-[#9ab3d1] p-0 pl-0.5 text-left font-bold text-black">
                  {g.title}
                </th>
                <td className="border-t-4 border-white bg-[#9ab3d1] p-0 align-top">
                  <button type="button" aria-label="Свернуть" className="ml-0.5 block pt-1">
                    <svg width="7" height="8" viewBox="0 0 7 8" fill="none" stroke="#000" strokeWidth="1.300" className="block">
                      <path d="M1 3.500L3.500 1 6 3.500M1 7.500L3.500 5 6 7.500" />
                    </svg>
                  </button>
                </td>
              </tr>
              {g.rows.map((r) => (
                <tr key={r.name} className={clsx(r.off && 'text-[#808080]')}>
                  <td className="h-6 overflow-hidden border-r border-b border-dotted border-[#707070] p-0 pl-0.5 leading-[22px] whitespace-nowrap">{r.name}</td>
                  <td className="overflow-hidden border-r border-b border-dotted border-[#707070] p-0 pl-0.5 leading-[22px] whitespace-nowrap">
                    {r.check ? (
                      <input
                        type="checkbox"
                        aria-label={r.name}
                        className="ml-px block h-4 w-4 appearance-none rounded border border-[#6a6a6a] bg-[#f6f6f6]"
                      />
                    ) : r.value}
                  </td>
                  <td className="border-r border-b border-dotted border-[#707070] p-0" />
                </tr>
              ))}
            </tbody>
          ))}
        </table>
      </div>
      <div className="flex w-[21px] shrink-0 flex-col items-center bg-[#f0f0f0] pt-[168px] pr-1">
        <span className="h-[343px] w-1.5 bg-[#858585]" />
      </div>
    </div>
  );
}

function TypeDialog() {
  return (
    <div
      role="dialog"
      aria-label="Свойства типа"
      className="absolute top-[51px] left-[30px] flex w-[535px] flex-col overflow-hidden rounded-lg bg-[#f0f0f0] text-xs text-[#111] shadow-[0_0_1px_1px_rgba(90,90,90,0.6),0_8px_36px_rgba(0,0,0,0.6)]"
    >
      <div className="flex h-[37px] items-center justify-between bg-[#eef4f9] pr-[15px] pl-2.5">
        <h2 className="text-sm font-normal text-black">Свойства типа</h2>
        <button type="button" aria-label="Закрыть">
          <svg width="12" height="12" viewBox="0 0 12 12" stroke="#000" strokeWidth="1.300" aria-hidden="true">
            <path d="M0 0l12 12M12 0L0 12" />
          </svg>
        </button>
      </div>

      <div className="flex flex-col pt-3.5 pr-[13px] pl-[25px]">
        <div className="flex h-[38px] items-start">
          <div className="flex min-w-0 flex-1 items-center"><Combo id="family" label="Семейство:" value="Сист. семейство: Тип перил" /></div>
          <DialogButton disabled className="mt-px w-[124px]">Загрузить...</DialogButton>
        </div>
        <div className="flex h-[38px] items-start">
          <div className="flex min-w-0 flex-1 items-center pt-0.5"><Combo id="type" label="Тип:" value="Труба(50) - Настенная" /></div>
          <DialogButton className="mt-px w-[124px]">Копировать...</DialogButton>
        </div>
        <DialogButton className="mt-px w-[124px] self-end">Переименовать...</DialogButton>
        <h3 className="pt-2.5 pb-1.5 leading-4 font-normal">Параметры типа</h3>
        <TypeTable />
        <a href="#functions" className="mt-4 self-start leading-4 text-[#0a63c9] underline">Какова функция данных свойств?</a>
      </div>

      <div className="flex gap-[9px] pt-[22px] pr-[13px] pl-6">
        <DialogButton disabled className="mr-auto w-[103px]">&lt;&lt; Просмотр</DialogButton>
        <DialogButton primary className="w-[103px]">ОК</DialogButton>
        <DialogButton className="w-[103px]">Отмена</DialogButton>
        <DialogButton disabled className="w-[103px]">Применить</DialogButton>
      </div>
      <div className="flex h-3.5 justify-end pr-0.5"><Grip /></div>
    </div>
  );
}

export default function App() {
  return (
    <div className="relative flex h-screen flex-col overflow-hidden bg-[#ccc] font-['Open_Sans','Noto_Sans',sans-serif]">
      <TitleBar />
      <MenuTabs />
      <Ribbon />
      <div className="h-[35px] shrink-0 border-b-[3px] border-[#ccc] bg-[#e5efd6] pl-2.5 text-sm leading-[34px] text-[#9aa08f]">
        Изм.
      </div>
      <div className="flex min-h-0 flex-1">
        <PropertiesPalette />
        <ModelView />
      </div>
      <TypeDialog />
    </div>
  );
}
